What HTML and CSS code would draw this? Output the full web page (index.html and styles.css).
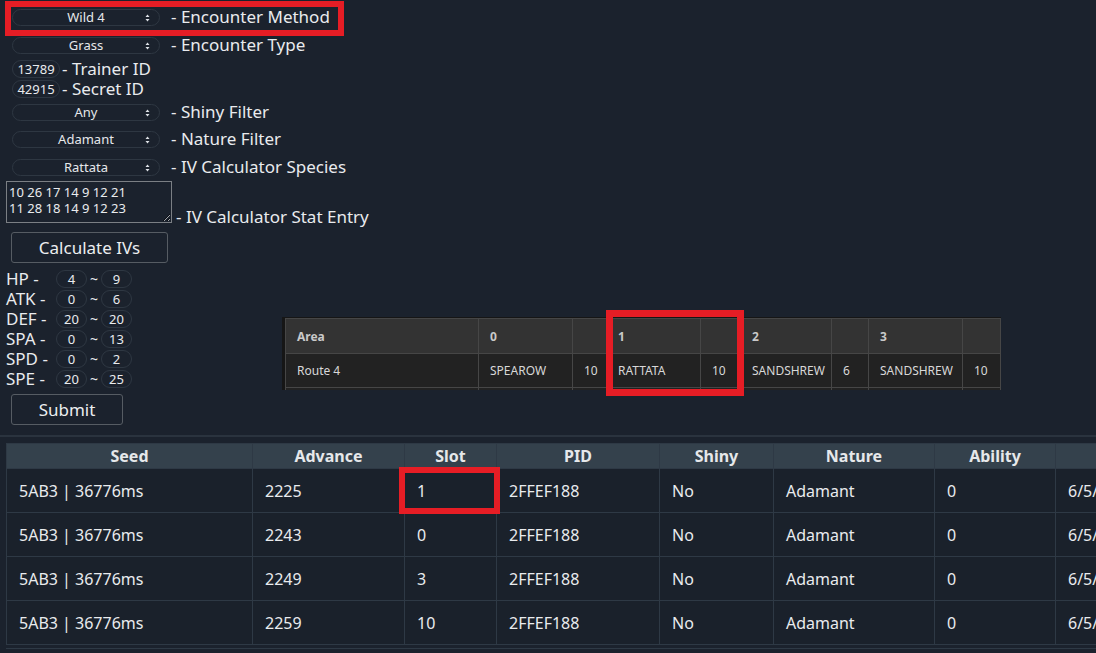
FILE: index.html
```html
<!DOCTYPE html>
<html>
<head>
<meta charset="utf-8">
<link rel="stylesheet" href="styles.css">
</head>
<body>
<div class="page">
  <div class="form">
    <div class="row sel-row r1">
      <span class="sel"><span class="sel-text">Wild 4</span><svg class="arrow" width="5" height="8" viewBox="0 0 5 8"><path d="M2.5 0.5 L4.5 3 H0.5 Z M2.5 7.5 L4.5 5 H0.5 Z" fill="#dfe3e8"/></svg></span>
      <span class="lbl lbl-sel">- Encounter Method</span>
    </div>
    <div class="row sel-row r2">
      <span class="sel"><span class="sel-text">Grass</span><svg class="arrow" width="5" height="8" viewBox="0 0 5 8"><path d="M2.5 0.5 L4.5 3 H0.5 Z M2.5 7.5 L4.5 5 H0.5 Z" fill="#dfe3e8"/></svg></span>
      <span class="lbl lbl-sel">- Encounter Type</span>
    </div>
    <div class="row id-row r3">
      <span class="idbox">13789</span><span class="lbl">- Trainer ID</span>
    </div>
    <div class="row id-row">
      <span class="idbox">42915</span><span class="lbl">- Secret ID</span>
    </div>
    <div class="row sel-row r5">
      <span class="sel"><span class="sel-text">Any</span><svg class="arrow" width="5" height="8" viewBox="0 0 5 8"><path d="M2.5 0.5 L4.5 3 H0.5 Z M2.5 7.5 L4.5 5 H0.5 Z" fill="#dfe3e8"/></svg></span>
      <span class="lbl lbl-sel">- Shiny Filter</span>
    </div>
    <div class="row sel-row r6">
      <span class="sel"><span class="sel-text">Adamant</span><svg class="arrow" width="5" height="8" viewBox="0 0 5 8"><path d="M2.5 0.5 L4.5 3 H0.5 Z M2.5 7.5 L4.5 5 H0.5 Z" fill="#dfe3e8"/></svg></span>
      <span class="lbl lbl-sel">- Nature Filter</span>
    </div>
    <div class="row sel-row r7">
      <span class="sel"><span class="sel-text">Rattata</span><svg class="arrow" width="5" height="8" viewBox="0 0 5 8"><path d="M2.5 0.5 L4.5 3 H0.5 Z M2.5 7.5 L4.5 5 H0.5 Z" fill="#dfe3e8"/></svg></span>
      <span class="lbl lbl-sel">- IV Calculator Species</span>
    </div>
    <div class="ta-row">
      <textarea class="ta">10 26 17 14 9 12 21
11 28 18 14 9 12 23</textarea><span class="lbl lbl-ta">- IV Calculator Stat Entry</span>
    </div>
    <button class="btn btn-calc">Calculate IVs</button>
  </div>

  <div class="mid">
    <div class="stats">
      <div class="stat"><span class="stat-lbl">HP -</span><span class="iv">4</span><span class="tilde">~</span><span class="iv">9</span></div>
      <div class="stat"><span class="stat-lbl">ATK -</span><span class="iv">0</span><span class="tilde">~</span><span class="iv">6</span></div>
      <div class="stat"><span class="stat-lbl">DEF -</span><span class="iv">20</span><span class="tilde">~</span><span class="iv">20</span></div>
      <div class="stat"><span class="stat-lbl">SPA -</span><span class="iv">0</span><span class="tilde">~</span><span class="iv">13</span></div>
      <div class="stat"><span class="stat-lbl">SPD -</span><span class="iv">0</span><span class="tilde">~</span><span class="iv">2</span></div>
      <div class="stat"><span class="stat-lbl">SPE -</span><span class="iv">20</span><span class="tilde">~</span><span class="iv">25</span></div>
      <button class="btn btn-submit">Submit</button>
    </div>
    <div class="enc-wrap">
      <table class="enc">
        <colgroup>
          <col style="width:193px"><col style="width:94px"><col style="width:34px"><col style="width:94px"><col style="width:40px"><col style="width:91px"><col style="width:37px"><col style="width:94px"><col style="width:38px">
        </colgroup>
        <thead>
          <tr><th>Area</th><th>0</th><th></th><th>1</th><th></th><th>2</th><th></th><th>3</th><th></th></tr>
        </thead>
        <tbody>
          <tr><td>Route 4</td><td>SPEAROW</td><td>10</td><td>RATTATA</td><td>10</td><td>SANDSHREW</td><td>6</td><td>SANDSHREW</td><td>10</td></tr>
          <tr class="cut"><td></td><td></td><td></td><td></td><td></td><td></td><td></td><td></td><td></td></tr>
        </tbody>
      </table>
    </div>
  </div>

  <div class="sep"></div>

  <div class="res-wrap">
    <table class="res">
      <colgroup>
        <col style="width:246px"><col style="width:152px"><col style="width:92px"><col style="width:163px"><col style="width:114px"><col style="width:161px"><col style="width:121px"><col style="width:160px">
      </colgroup>
      <thead>
        <tr><th>Seed</th><th>Advance</th><th>Slot</th><th>PID</th><th>Shiny</th><th>Nature</th><th>Ability</th><th>IVs</th></tr>
      </thead>
      <tbody>
        <tr><td>5AB3 | 36776ms</td><td>2225</td><td>1</td><td>2FFEF188</td><td>No</td><td>Adamant</td><td>0</td><td>6/5/20/13/2/25</td></tr>
        <tr><td>5AB3 | 36776ms</td><td>2243</td><td>0</td><td>2FFEF188</td><td>No</td><td>Adamant</td><td>0</td><td>6/5/20/13/2/25</td></tr>
        <tr><td>5AB3 | 36776ms</td><td>2249</td><td>3</td><td>2FFEF188</td><td>No</td><td>Adamant</td><td>0</td><td>6/5/20/13/2/25</td></tr>
        <tr><td>5AB3 | 36776ms</td><td>2259</td><td>10</td><td>2FFEF188</td><td>No</td><td>Adamant</td><td>0</td><td>6/5/20/13/2/25</td></tr>
      </tbody>
    </table>
  </div>

  <div class="mark mark-method"></div>
  <div class="mark mark-slot1"></div>
  <div class="mark mark-cell"></div>
</div>
</body>
</html>
```

FILE: styles.css
```css
html, body {
  margin: 0;
  padding: 0;
  background: #1b222d;
  overflow: hidden;
}
body {
  width: 1096px;
  height: 653px;
  color: #e9ebee;
  font-family: "Noto Sans", "Open Sans", sans-serif;
}
.page {
  position: relative;
  width: 1096px;
  height: 653px;
  overflow: hidden;
}
.form {
  padding: 6px 0 0 6px;
}
.row {
  display: flex;
  align-items: center;
}
.sel-row { height: 22px; }
.id-row { height: 20px; }
.r2 { margin-top: 6px; }
.r3 { margin-top: 3px; }
.r5 { margin-top: 2px; }
.r6 { margin-top: 5px; }
.r7 { margin-top: 6px; }

.sel {
  position: relative;
  box-sizing: border-box;
  margin-left: 6px;
  width: 148px;
  height: 17px;
  border: 1px solid #2e3742;
  border-radius: 9px;
  display: flex;
  align-items: center;
  justify-content: center;
  font-size: 13px;
  color: #e6e8eb;
}
.sel-text { line-height: 15px; }
.arrow {
  position: absolute;
  right: 9px;
  top: 4px;
}
.lbl {
  font-size: 17px;
  line-height: 20px;
  white-space: nowrap;
}
.lbl-sel { margin-left: 11px; }
.idbox {
  box-sizing: border-box;
  margin-left: 6px;
  width: 48px;
  height: 18px;
  border: 1px solid #2e3742;
  border-radius: 9px;
  font-size: 13px;
  line-height: 16px;
  text-align: center;
  margin-right: 2px;
}
.ta-row {
  margin-top: 3px;
  height: 43px;
  white-space: nowrap;
}
.ta {
  box-sizing: border-box;
  width: 166px;
  height: 42px;
  margin: 0;
  padding: 2px 2px;
  background: #1b222d;
  color: #e9ebee;
  border: 1px solid #7b7f84;
  border-radius: 0;
  font-family: "Noto Sans", sans-serif;
  font-size: 13px;
  line-height: 16px;
  resize: both;
  overflow: hidden;
  vertical-align: baseline;
}
.lbl-ta { margin-left: 4px; }
.btn {
  display: block;
  box-sizing: border-box;
  background: transparent;
  border: 1px solid #565c63;
  border-radius: 3px;
  color: #eceef0;
  font-family: "Noto Sans", sans-serif;
  font-size: 17px;
  padding: 0;
}
.btn-calc {
  margin: 8px 0 0 5px;
  width: 157px;
  height: 31px;
}
.mid {
  display: flex;
  align-items: flex-start;
}
.stats {
  width: 276px;
  padding: 6px 0 0 6px;
}
.stat {
  display: flex;
  align-items: center;
  height: 20px;
  line-height: 20px;
}
.stat-lbl {
  width: 50px;
  font-size: 17px;
  line-height: 20px;
  white-space: nowrap;
}
.iv {
  box-sizing: border-box;
  width: 31px;
  height: 18px;
  border: 1px solid #2e3742;
  border-radius: 9px;
  font-size: 13px;
  line-height: 16px;
  text-align: center;
}
.tilde {
  width: 14px;
  text-align: center;
  font-size: 14px;
  line-height: 18px;
}
.btn-submit {
  margin: 5px 0 0 5px;
  width: 112px;
  height: 31px;
}
.enc-wrap {
  margin-top: 54px;
  height: 73px;
  overflow: hidden;
  background: #161616;
  padding: 1px 0 0 3px;
  box-sizing: border-box;
}
.enc {
  border-collapse: collapse;
  table-layout: fixed;
  width: 715px;
  font-family: "Noto Sans", "Open Sans", sans-serif;
  font-size: 12px;
}
.enc th, .enc td {
  border: 1px solid #464646;
  padding: 0 0 0 11px;
  text-align: left;
  white-space: nowrap;
}
.enc th {
  background: #333333;
  color: #c9c9c9;
  font-weight: bold;
  height: 34px;
}
.enc td {
  background: #222222;
  color: #d8d8d8;
  height: 33px;
}
.enc tr.cut td { height: 20px; }

.sep {
  margin-top: 10px;
  height: 2px;
  background: #2a333e;
}
.res-wrap {
  margin-top: 6px;
  margin-left: 6px;
  width: 1200px;
  border-bottom: 1px solid #2e3945;
  padding-bottom: 3px;
}
.res {
  border-collapse: collapse;
  table-layout: fixed;
  width: 1209px;
  font-size: 16px;
}
.res th, .res td {
  border: 1px solid #2e3945;
  white-space: nowrap;
  overflow: hidden;
}
.res th {
  background: #34414c;
  height: 24px;
  font-weight: bold;
  text-align: center;
  padding: 0;
  color: #e6e8ea;
}
.res td {
  height: 43px;
  padding: 0 0 0 12px;
  text-align: left;
  background: #1a212b;
  color: #e9ebee;
}

.mark {
  position: absolute;
  border: 6px solid #e61d25;
  box-sizing: border-box;
}
.mark-method {
  left: 5px;
  top: 1px;
  width: 339px;
  height: 35px;
}
.mark-slot1 {
  left: 606px;
  top: 310px;
  width: 138px;
  height: 86px;
  border-width: 7px;
}
.mark-cell {
  left: 399px;
  top: 467px;
  width: 101px;
  height: 47px;
}
```
